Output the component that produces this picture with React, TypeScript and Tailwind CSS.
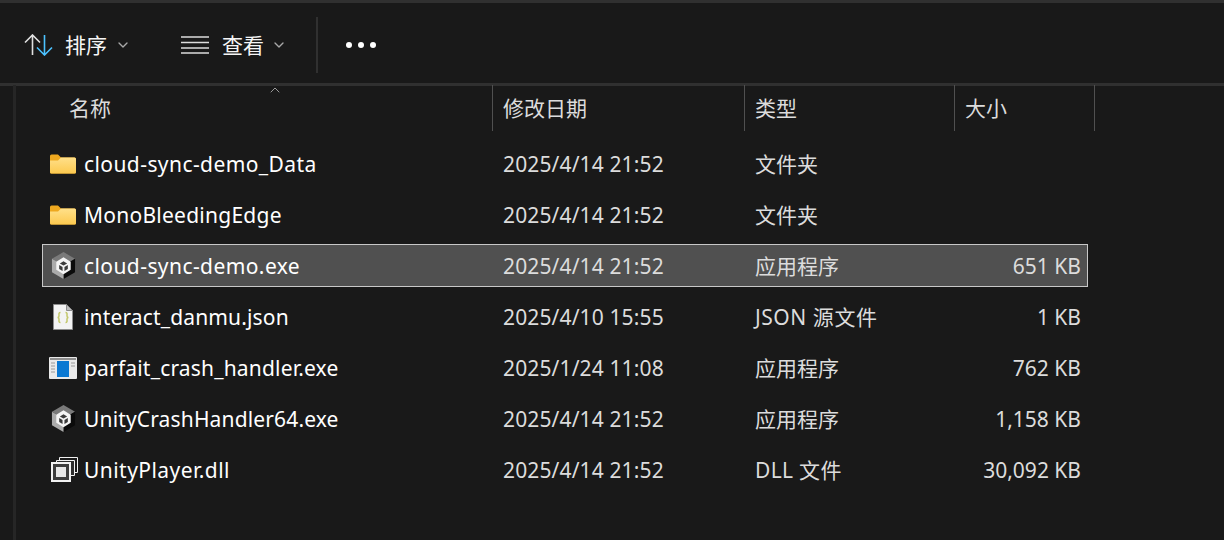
import { ChevronDown, ChevronUp } from "lucide-react";

const FolderIcon = () => (
  <svg width="26" height="20" viewBox="0 0 26 20">
    <defs>
      <linearGradient id="folderFront" x1="0" y1="0" x2="0" y2="1">
        <stop offset="0" stopColor="#ffe08a" />
        <stop offset="1" stopColor="#fcc94f" />
      </linearGradient>
    </defs>
    <path d="M0 2a1.500 1.500 0 0 1 1.500-1.500h6.500l3 3h13.500a1.500 1.500 0 0 1 1.500 1.500v13a1.500 1.500 0 0 1-1.500 1.500h-23a1.500 1.500 0 0 1-1.500-1.500z" fill="#eea81f" />
    <path d="M0 6.500h8l3-3h13.500a1.500 1.500 0 0 1 1.500 1.500v13a1.500 1.500 0 0 1-1.500 1.500h-23a1.500 1.500 0 0 1-1.500-1.500z" fill="url(#folderFront)" />
  </svg>
);

const UnityIcon = () => (
  <svg width="25" height="29" viewBox="0 0 26 30">
    <path d="M13 1 25 8 13 15 1 8z" fill="#7a7a7a" />
    <path d="M13 15 25 8v14l-12 7z" fill="#0b0b0b" />
    <path d="M1 8l12 7v14L1 22z" fill="#ababab" />
    <path d="M13 6.500 20.500 11v8.500L13 24l-7.500-4.500V11z" fill="#f4f4f4" />
    <path d="M13 10.500 16.800 12.800 13 15 9.200 12.800z" fill="#3a3a3a" />
    <path d="M8.500 14.500 12 16.500v4.200L8.500 18.700z" fill="#3a3a3a" />
    <path d="M17.500 14.500 14 16.500v4.200l3.500-2z" fill="#3a3a3a" />
  </svg>
);

const JsonIcon = () => (
  <svg width="20" height="26" viewBox="0 0 20 26">
    <path d="M.5.500h13l6 6v19H.5z" fill="#f3f3f3" stroke="#8c8c8c" />
    <path d="M13.500.500v6h6z" fill="#bdbdbd" stroke="#8c8c8c" />
    <path d="M7.500 8.500c-2 0-1.500 2-1.500 3.500s-.5 1.500-1.500 1.500c1 0 1.500 0 1.500 1.500s-.5 3.500 1.500 3.500M12.500 8.500c2 0 1.500 2 1.500 3.500s.5 1.500 1.500 1.500c-1 0-1.500 0-1.500 1.500s.5 3.500-1.500 3.500" fill="none" stroke="#c3c76a" strokeWidth="1.500" />
  </svg>
);

const ExeIcon = () => (
  <svg width="28" height="22" viewBox="0 0 28 22">
    <rect width="28" height="22" rx="1" fill="#e9e9e9" />
    <rect x="1" y="1" width="26" height="2" fill="#8f8f8f" />
    <rect x="8" y="4" width="12" height="16" fill="#0a78d2" />
    <path d="M2 6h4M2 9h4M2 12h4M2 15h4M22 6h4M22 9h4" stroke="#9a9a9a" />
  </svg>
);

const DllIcon = () => (
  <svg width="27" height="25" viewBox="0 0 27 25" className="ml-[2px]">
    <path d="M8.500 4V.5h18v15h-4" fill="none" stroke="#f0f0f0" />
    <path d="M5.500 6V3.500h18v15h-4" fill="#2c2c2c" stroke="#f0f0f0" />
    <rect x="1" y="6" width="18" height="18" fill="#3d3d3d" stroke="#f2f2f2" strokeWidth="2" />
    <rect x="5" y="10" width="10" height="10" fill="#e8e8e8" />
  </svg>
);

const SortIcon = () => (
  <svg width="29" height="22" viewBox="0 0 29 22">
    <path d="M8.500 21V1M1 8.500l7.500-7.500 7.500 7.500" fill="none" stroke="#e0e0e0" strokeWidth="1.600" />
    <path d="M20.500 1v20M13 13.500l7.500 7.500 7.500-7.500" fill="none" stroke="#4cc2ff" strokeWidth="1.600" />
  </svg>
);

const ListIcon = () => (
  <svg width="28" height="18" viewBox="0 0 28 18">
    <path d="M0 1h28M0 6.500h28M0 12h28M0 17h28" stroke="#dcdcdc" strokeWidth="1.500" />
  </svg>
);

const Rows = [
  { name: "cloud-sync-demo_Data", track: "tracking-[0.42px]", date: "2025/4/14 21:52", type: "文件夹", typeTrack: "", size: "", icon: <FolderIcon /> },
  { name: "MonoBleedingEdge", track: "tracking-[0.25px]", date: "2025/4/14 21:52", type: "文件夹", typeTrack: "", size: "", icon: <FolderIcon /> },
  { name: "cloud-sync-demo.exe", track: "tracking-[0.42px]", date: "2025/4/14 21:52", type: "应用程序", typeTrack: "", size: "651 KB", icon: <UnityIcon />, selected: true },
  { name: "interact_danmu.json", track: "tracking-[0.15px]", date: "2025/4/10 15:55", type: "JSON 源文件", typeTrack: "tracking-[0.55px]", size: "1 KB", icon: <JsonIcon /> },
  { name: "parfait_crash_handler.exe", track: "tracking-[0.18px]", date: "2025/1/24 11:08", type: "应用程序", typeTrack: "", size: "762 KB", icon: <ExeIcon /> },
  { name: "UnityCrashHandler64.exe", track: "tracking-[0.15px]", date: "2025/4/14 21:52", type: "应用程序", typeTrack: "", size: "1,158 KB", icon: <UnityIcon /> },
  { name: "UnityPlayer.dll", track: "tracking-[0.45px]", date: "2025/4/14 21:52", type: "DLL 文件", typeTrack: "tracking-[0.33px]", size: "30,092 KB", icon: <DllIcon /> },
];

const Header = [
  { label: "名称", className: "w-[476px] pl-[53px]" },
  { label: "修改日期", className: "w-[252px] border-l pl-[10px]" },
  { label: "类型", className: "w-[210px] border-l pl-[10px]" },
  { label: "大小", className: "w-[141px] border-x pl-[10px]" },
];

const Toolbar = () => (
  <div className="flex items-center h-[76px] pt-[4px] pl-[24px] border-b-[3px] border-[#303030] box-content -mb-px">
    <SortIcon />
    <span className="ml-[12px] pt-[2px] text-[#f5f5f5]">排序</span>
    <ChevronDown size={16} className="ml-[8px] text-[#a8a8a8]" />
    <div className="ml-[50px]"><ListIcon /></div>
    <span className="ml-[13px] pt-[2px] text-[#f5f5f5]">查看</span>
    <ChevronDown size={16} className="ml-[7px] text-[#a8a8a8]" />
    <div className="ml-[29px] w-[2px] h-[56px] bg-[#303030]" />
    <div className="ml-[28px] flex gap-[6px]">
      <div className="w-[6px] h-[6px] rounded-full bg-white" />
      <div className="w-[6px] h-[6px] rounded-full bg-white" />
      <div className="w-[6px] h-[6px] rounded-full bg-white" />
    </div>
  </div>
);

export default function App() {
  return (
    <div className="w-[1224px] h-[540px] overflow-hidden bg-[#191919] text-[21px] text-white font-['Noto_Sans','Noto_Sans_CJK_SC',sans-serif]">
      <div className="h-[3px] bg-[#303030]" />
      <Toolbar />
      <div className="ml-[13px] h-[456px] border-l-[3px] border-[#262626]">
        <div className="relative flex h-[46px] text-[#dcdcdc]">
          {Header.map(col => (
            <div key={col.label} className={`flex items-center border-[#505050] ${col.className}`}>
              <span className="pt-[2px]">{col.label}</span>
            </div>
          ))}
          <ChevronUp size={16} strokeWidth={1.500} className="absolute left-[251px] -top-[3px] text-[#9a9a9a]" />
        </div>
        <div className="flex flex-col gap-[8px] mt-[11px] ml-[26px] w-[1046px]">
          {Rows.map(row => (
            <div
              key={row.name}
              className={`grid grid-cols-[460px_252px_210px_122px] items-center h-[43px] border ${row.selected ? "border-[#c8c8c8] bg-[#505050]" : "border-transparent"}`}
            >
              <div className="flex items-center">
                <div className="flex justify-center w-[41px] shrink-0 pr-[1px]">{row.icon}</div>
                <span className={`pt-[2px] whitespace-nowrap ${row.track}`}>{row.name}</span>
              </div>
              <span className="pt-[2px] tracking-[0.13px] text-[#dcdcdc] whitespace-nowrap">{row.date}</span>
              <span className={`pt-[2px] text-[#dcdcdc] whitespace-nowrap ${row.typeTrack}`}>{row.type}</span>
              <span className="pt-[2px] pr-[6px] text-[#dcdcdc] text-right whitespace-nowrap">{row.size}</span>
            </div>
          ))}
        </div>
      </div>
    </div>
  );
}
